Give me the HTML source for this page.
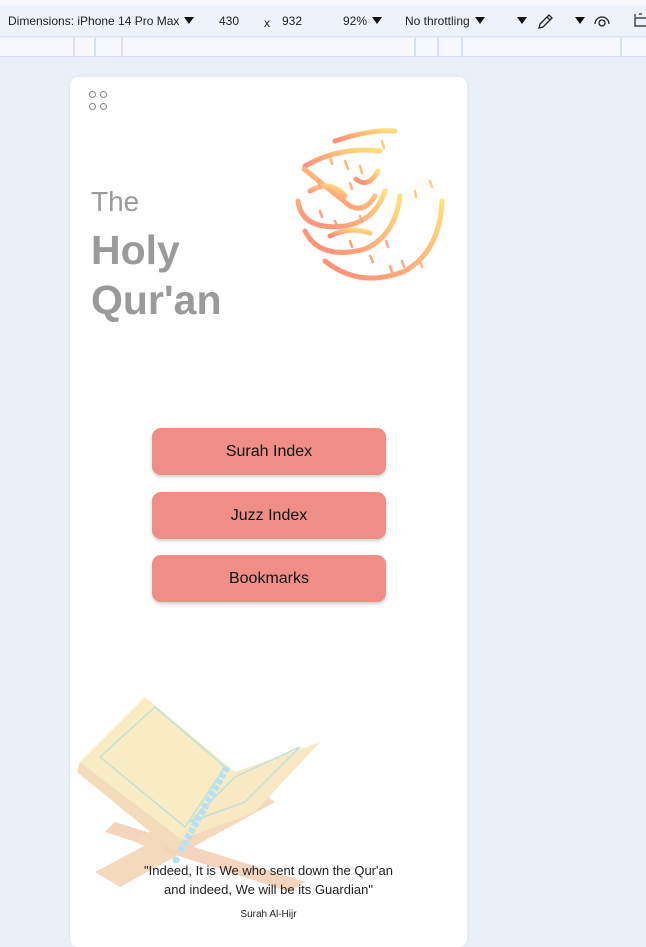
<!DOCTYPE html>
<html><head><meta charset="utf-8"><style>
*{margin:0;padding:0;box-sizing:border-box}
body{width:646px;height:935px;overflow:hidden;background:#ebeff7;font-family:"Liberation Sans",sans-serif;position:relative}
.top{position:absolute;left:0;top:0;width:646px;height:5px;background:#f7f8fb}
.bar{position:absolute;left:0;top:5px;width:646px;height:32px;background:#eef2fa;border-bottom:1px solid #d9e3f3;font-size:12px;color:#222}
.bar span{position:absolute;top:9px;white-space:nowrap}
.tri{display:inline-block;width:0;height:0;border-left:5px solid transparent;border-right:5px solid transparent;border-top:7px solid #111;margin-left:5px;vertical-align:1px}
.ruler{position:absolute;left:0;top:38px;width:646px;height:19px;background:#f6f8fd;border-bottom:1px solid #d3def0}
.ruler i{position:absolute;top:0;width:2px;height:19px;background:#d3e0f5}
.card{position:absolute;left:70px;top:77px;width:397px;height:870px;background:#fff;border-radius:8px;box-shadow:0 0 3px rgba(0,0,0,.08);overflow:hidden}
.dots{position:absolute;left:19px;top:14px}
.dots b{position:absolute;width:7px;height:7px;border:1.3px solid #888;border-radius:50%}
.t1{position:absolute;left:21px;top:109px;font-size:28px;color:#9a9a9a}
.t2{position:absolute;left:21px;top:148px;font-size:41px;font-weight:bold;color:#9a9a9a;line-height:50px}
.btn{position:absolute;left:82px;width:234px;height:47px;background:#ee8e87;border-radius:9px;box-shadow:0 2px 3px rgba(0,0,0,.2);text-align:center;line-height:47px;font-size:16px;color:#111}
.q{position:absolute;left:0;width:397px;text-align:center;font-size:13px;color:#222;line-height:19px}
</style></head><body>
<div class="top"></div>
<div class="bar">
<span style="left:8px">Dimensions: iPhone 14 Pro Max<i class="tri"></i></span>
<span style="left:219px">430</span>
<span style="left:264px;top:11px">x</span><span style="left:282px">932</span>
<span style="left:343px">92%<i class="tri"></i></span>
<span style="left:405px">No throttling<i class="tri"></i></span>
<span style="left:512px"><i class="tri"></i></span>
<svg style="position:absolute;left:536px;top:7px" width="18" height="18" viewBox="0 0 18 18" fill="none" stroke="#222" stroke-width="1.3"><path d="M3 16l1-4 7-7 3 3-7 7z M11 5l2-2 3 3-2 2"/></svg>
<span style="left:570px"><i class="tri"></i></span>
<svg style="position:absolute;left:593px;top:9px" width="18" height="14" viewBox="0 0 18 14" fill="none" stroke="#222" stroke-width="1.3"><path d="M2 10a7 7 0 0 1 14 0"/><circle cx="9" cy="9" r="3"/></svg>
<svg style="position:absolute;left:634px;top:8px" width="14" height="14" fill="none" stroke="#222" stroke-width="1.2"><path d="M1 5h12v8H1z M1 1v3 M5 1h3"/></svg>
</div>
<div class="ruler"><i style="left:73px"></i><i style="left:94px"></i><i style="left:121px"></i><i style="left:414px"></i><i style="left:437px"></i><i style="left:461px"></i><i style="left:620px"></i></div>
<div class="card">
<div class="dots"><b style="left:0;top:0"></b><b style="left:11px;top:0"></b><b style="left:0;top:12px"></b><b style="left:11px;top:12px"></b></div>
<svg style="position:absolute;left:220px;top:44px" width="165" height="170" viewBox="0 0 165 170" fill="none" stroke-linecap="round">
<defs><linearGradient id="g" x1="0" y1="1" x2="1" y2="0"><stop offset="0" stop-color="#ff8a7a"/><stop offset="1" stop-color="#ffe07a"/></linearGradient></defs>
<g stroke="url(#g)" stroke-width="5">
<path d="M45 20 Q80 8 105 10"/><path d="M15 45 Q50 25 90 30"/>
<path d="M14 48 L60 85 Q75 92 85 75"/>
<path d="M8 80 Q12 110 55 105 Q85 100 95 70"/>
<path d="M15 110 Q30 140 75 128 Q105 115 110 75"/>
<path d="M35 140 Q70 168 115 150 Q150 130 152 80"/>
<path d="M120 18 V128"/><path d="M135 28 V130"/><path d="M150 45 V110"/><path d="M105 35 V110"/><path d="M88 50 Q78 68 66 58"/>
<path d="M20 70 Q40 58 55 75"/><path d="M40 115 Q60 105 80 112"/>
</g>
<g stroke="url(#g)" stroke-width="2.5"><path d="M40 35l2 8M55 40l3 8M70 45l2 7M30 90l2 6M45 100l3 6M60 120l2 6M80 135l3 6M100 145l2 6M130 140l2 6M140 60l2 6M125 70l1 6M92 20l2 7M28 60l2 6M60 62l2 6M96 120l2 6M70 95l2 6M112 140l2 6"/></g>
</svg>
<div class="t1">The</div>
<div class="t2">Holy<br>Qur'an</div>
<div class="btn" style="top:351px">Surah Index</div>
<div class="btn" style="top:415px">Juzz Index</div>
<div class="btn" style="top:478px">Bookmarks</div>
<svg style="position:absolute;left:5px;top:615px;opacity:.5" width="250" height="200" viewBox="0 0 250 200">
<path d="M20 180 L180 95 L200 110 L45 195z" fill="#eab47e"/>
<path d="M40 130 L230 190 L215 200 L30 140z" fill="#eaab7e"/>
<path d="M60 150 Q80 130 100 145 L85 160z" fill="#eab47e"/>
<path d="M5 70 L70 5 L160 80 L110 150z" fill="#f5d98a"/>
<path d="M100 150 L160 80 L245 50 L180 120z" fill="#f2d48a"/>
<path d="M5 70 L110 150 L100 160 L2 80z" fill="#e8b97a"/>
<path d="M25 65 L80 15 L150 75 L110 135z" fill="none" stroke="#7fc6b3" stroke-width="1.5"/>
<path d="M115 130 L160 85 L225 55 L170 110z" fill="none" stroke="#7fc6b3" stroke-width="1.5"/>
<path d="M152 75 L105 160" stroke="#6ec6ea" stroke-width="7" stroke-dasharray="5 2"/>
<circle cx="101" cy="168" r="3.5" fill="#6ec6ea"/>
</svg>
<div class="q" style="top:784px">"Indeed, It is We who sent down the Qur'an<br>and indeed, We will be its Guardian"</div>
<div class="q" style="top:828px;font-size:10px">Surah Al-Hijr</div>
</div>
</body></html>
